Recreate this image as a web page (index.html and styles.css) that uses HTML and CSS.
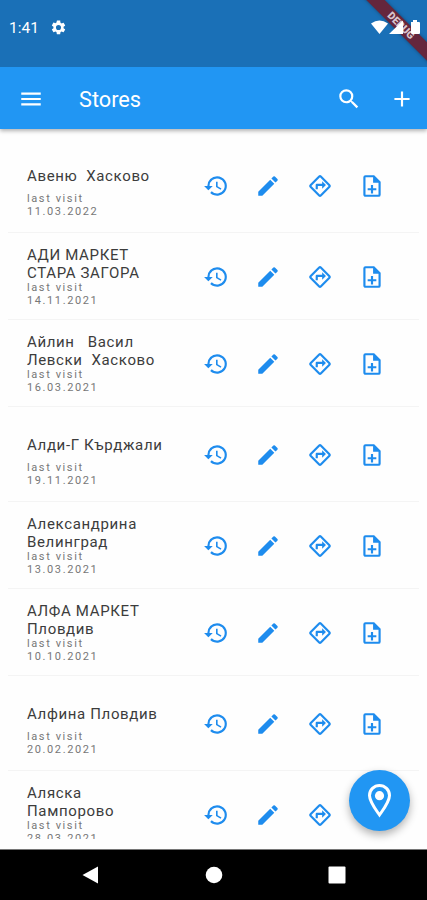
FILE: index.html
```html
<!DOCTYPE html>
<html lang="bg">
<head>
  <meta charset="UTF-8">
  <title>Stores</title>
  <meta name="viewport" content="width=device-width, initial-scale=1.0">
  <link rel="stylesheet" href="styles.css">
</head>
<body>
  <svg class="sprite" aria-hidden="true">
    <symbol id="history" viewBox="0 0 24 24"><path d="M13 3a9 9 0 0 0-9 9H1l3.9 3.9.1.1L9 12H6a7 7 0 1 1 2.05 4.95l-1.42 1.41A9 9 0 1 0 13 3zm-1 5v5l4.28 2.54.72-1.21-3.5-2.08V8H12z"/></symbol>
    <symbol id="edit" viewBox="0 0 24 24"><path d="M3 17.25V21h3.75L17.8 9.94l-3.75-3.75L3 17.25zM20.7 7.04a1 1 0 0 0 0-1.41l-2.34-2.34a1 1 0 0 0-1.41 0l-1.83 1.83 3.75 3.75 1.83-1.83z"/></symbol>
    <symbol id="directions" viewBox="0 0 24 24"><path d="M21.41 10.59l-7.99-8a2 2 0 0 0-2.83 0l-8.01 8a2 2 0 0 0 0 2.82l8.01 8a2 2 0 0 0 2.82 0l8-8a2 2 0 0 0 0-2.82zM12 19.99L4 12l8-8 8 8-8 7.99zM8 11v4h2v-3h4v2.5l3.5-3.5L14 7.5V10H9a1 1 0 0 0-1 1z"/></symbol>
    <symbol id="note-add" viewBox="0 0 24 24"><path d="M13 11h-2v3H8v2h3v3h2v-3h3v-2h-3v-3zm1-9H6a2 2 0 0 0-2 2v16c0 1.1.89 2 1.99 2H18a2 2 0 0 0 2-2V8l-6-6zm4 18H6V4h7v5h5v11z"/></symbol>
  </svg>

  <div class="status-bar">
    <span class="time">1:41</span>
    <svg class="gear" viewBox="0 0 24 24"><path d="M19.14 12.94a7 7 0 0 0 0-1.88l2.03-1.58a.5.5 0 0 0 .12-.61l-1.92-3.32a.5.5 0 0 0-.59-.22l-2.39.96a7 7 0 0 0-1.62-.94l-.36-2.54A.5.5 0 0 0 13.93 2h-3.84a.5.5 0 0 0-.48.41l-.36 2.54a7 7 0 0 0-1.62.94l-2.39-.96a.5.5 0 0 0-.59.22L2.74 8.87a.5.5 0 0 0 .12.61l2.03 1.58a7 7 0 0 0 0 1.88l-2.03 1.58a.5.5 0 0 0-.12.61l1.92 3.32c.12.22.37.29.59.22l2.39-.96c.5.38 1.03.7 1.62.94l.36 2.54c.05.24.24.41.48.41h3.84c.24 0 .44-.17.47-.41l.36-2.54a7 7 0 0 0 1.62-.94l2.39.96c.22.08.47 0 .59-.22l1.92-3.32a.5.5 0 0 0-.12-.61l-2.01-1.58zM12 15.6a3.6 3.6 0 1 1 0-7.2 3.600 3.600 0 0 1 0 7.200z"/></svg>
    <svg class="signals" viewBox="0 0 50 16">
      <path d="M0 3.5Q8.500 -2.500 17 3.500L8.500 14z"/>
      <path d="M18 14L32 0.500V14z"/>
      <path d="M40 2h2V0h4v2h2q1 0 1 1v10q0 1-1 1h-7q-1 0-1-1z"/>
    </svg>
    <div class="debug"><span>DEBUG</span></div>
  </div>

  <header class="app-bar">
    <svg class="icon" viewBox="0 0 24 24"><path d="M3 18h18v-2H3v2zm0-5h18v-2H3v2zm0-7v2h18V6H3z"/></svg>
    <h1>Stores</h1>
    <svg class="icon" viewBox="0 0 24 24"><path d="M15.5 14h-.79l-.28-.27A6.47 6.47 0 0 0 16 9.5 6.5 6.5 0 1 0 9.5 16c1.61 0 3.09-.59 4.23-1.57l.27.28v.79l5 4.99L20.49 19l-4.99-5zm-6 0a4.5 4.5 0 1 1 0-9 4.5 4.5 0 0 1 0 9z"/></svg>
    <svg class="icon" viewBox="0 0 24 24"><path d="M19 13h-6v6h-2v-6H5v-2h6V5h2v6h6v2z"/></svg>
  </header>

  <main class="list" id="storeList"></main>

  <button class="fab" aria-label="Map">
    <svg viewBox="0 0 24 34"><path class="pin" d="M12 31C7 24 2 17.5 2 11.5a10 10 0 0 1 20 0C22 17.5 17 24 12 31z"/><circle cx="12" cy="11.7" r="4.6"/></svg>
  </button>

  <nav class="nav-bar">
    <svg viewBox="0 0 20 20"><path d="M1.5 10L17 1.500v17z"/></svg>
    <svg viewBox="0 0 20 20"><circle cx="10" cy="10" r="8.3"/></svg>
    <svg viewBox="0 0 20 20"><rect x="1.5" y="1.5" width="17" height="17" rx="1"/></svg>
  </nav>

  <script>
    const stores = [
      { name: "Авеню  Хасково", date: "11.03.2022" },
      { name: "АДИ МАРКЕТ\nСТАРА ЗАГОРА", date: "14.11.2021" },
      { name: "Айлин   Васил\nЛевски  Хасково", date: "16.03.2021" },
      { name: "Алди-Г Кърджали", date: "19.11.2021" },
      { name: "Александрина\nВелинград", date: "13.03.2021" },
      { name: "АЛФА МАРКЕТ\nПловдив", date: "10.10.2021" },
      { name: "Алфина Пловдив", date: "20.02.2021" },
      { name: "Аляска\nПампорово", date: "28.03.2021" }
    ];
    const actions = ["history", "edit", "directions", "note-add"];

    document.getElementById("storeList").innerHTML = stores.map(store => `
      <div class="store ${store.name.includes("\n") ? "two-line" : ""}">
        <div class="info">
          <div class="name">${store.name}</div>
          <div class="visit">last visit<br>${store.date}</div>
        </div>
        <div class="actions">
          ${actions.map(a => `<svg><use href="#${a}"/></svg>`).join("")}
        </div>
      </div>`).join("");
  </script>
</body>
</html>
```
FILE: styles.css
```css
* {
  box-sizing: border-box;
  font-family: Roboto, sans-serif;
}
body {
  margin: 0;
  height: 900px;
  display: flex;
  flex-direction: column;
  background: #fefefe;
  overflow: hidden;
  position: relative;
}
.sprite {
  display: none;
}
svg {
  display: block;
  fill: currentColor;
  flex: none;
}

/* status bar */
.status-bar {
  height: 67px;
  flex: none;
  display: flex;
  align-items: flex-start;
  padding: 19px 6px 0 9px;
  background: #1a70b7;
  color: #fff;
  position: relative;
  overflow: hidden;
}
.time {
  width: 41px;
  font-size: 15.5px;
  line-height: 19px;
}
.gear {
  width: 17px;
  height: 17px;
}
.signals {
  width: 50px;
  height: 16px;
  margin: 1px 0 0 auto;
  position: relative;
  z-index: 1;
}
.debug {
  position: absolute;
  top: 19px;
  right: -34px;
  width: 120px;
  height: 13px;
  background: #65263c;
  color: #d9c5ce;
  font-size: 10.5px;
  font-weight: 900;
  line-height: 13px;
  text-align: center;
  transform: rotate(45deg);
  box-shadow: 0 0 4px rgba(0,0,0,0.35);
}

/* app bar */
.app-bar {
  height: 62px;
  flex: none;
  display: flex;
  align-items: center;
  padding: 1px 12px 0 18px;
  background: #2196f3;
  color: #fff;
  box-shadow: 0 2px 4px rgba(0,0,0,0.3);
}
.icon {
  width: 26px;
  height: 26px;
}
h1 {
  flex: 1;
  margin: 1px 0 0 35px;
  font-size: 21.7px;
  font-weight: 400;
}
.icon + .icon {
  margin-left: 27px;
}

/* store list */
.list {
  height: 701px;
  margin: 9px 8px 10px;
  overflow: hidden;
}
.store {
  height: 95px;
  display: flex;
  align-items: center;
  padding: 1px 0 0 19px;
  border-bottom: 1px solid #f4f4f4;
}
.store.two-line {
  height: 87px;
}
.info {
  width: 176px;
  padding-top: 15px;
}
.name {
  font-size: 15px;
  line-height: 17.3px;
  letter-spacing: 0.65px;
  white-space: pre;
  color: #3c3c3c;
}
.visit {
  margin-top: 6px;
  font-size: 11px;
  line-height: 13px;
  letter-spacing: 1.6px;
  color: #777;
}
.two-line .info {
  padding-top: 1px;
}
.two-line .visit {
  margin-top: -1px;
}
.actions {
  display: flex;
  gap: 26px;
  color: #1e8cee;
}
.actions svg {
  width: 26px;
  height: 26px;
}

.fab {
  position: absolute;
  right: 17px;
  bottom: 69px;
  width: 61px;
  height: 61px;
  padding: 0;
  display: flex;
  align-items: center;
  justify-content: center;
  border: none;
  border-radius: 50%;
  background: #2196f3;
  color: #fff;
  box-shadow: 0 4px 8px rgba(0,0,0,0.3);
}
.fab svg {
  width: 25px;
  height: 34px;
}
.pin {
  fill: none;
  stroke: #fff;
  stroke-width: 3;
}

/* android navigation */
.nav-bar {
  height: 51px;
  flex: none;
  display: flex;
  justify-content: center;
  align-items: center;
  gap: 103px;
  background: #000;
  color: #fff;
  border-top: 1px solid #777;
}
.nav-bar svg {
  width: 20px;
  height: 20px;
}
```
